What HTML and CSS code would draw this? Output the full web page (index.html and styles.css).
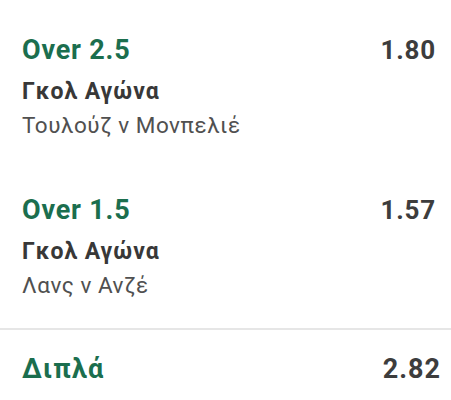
FILE: index.html
```html
<!DOCTYPE html>
<html lang="el">
<head>
    <meta charset="UTF-8">
    <meta name="viewport" content="width=device-width, initial-scale=1.0">
    <title>Betslip</title>
    <link rel="stylesheet" href="styles.css">
</head>
<body>
    <div class="slip">
        <div class="bet">
            <div class="bet-head">
                <span class="pick">Over 2.5</span>
                <span class="odds">1.80</span>
            </div>
            <div class="market">Γκολ Αγώνα</div>
            <div class="event">Τουλούζ ν Μονπελιέ</div>
        </div>
        <div class="bet">
            <div class="bet-head">
                <span class="pick">Over 1.5</span>
                <span class="odds">1.57</span>
            </div>
            <div class="market">Γκολ Αγώνα</div>
            <div class="event">Λανς ν Ανζέ</div>
        </div>
    </div>
    <div class="total">
        <span class="total-name">Διπλά</span>
        <span class="total-odds">2.82</span>
    </div>
</body>
</html>
```

FILE: styles.css
```css
body{
    margin: 0;
    background: #ffffff;
    font-family: Roboto, "Noto Sans", sans-serif;
}
.slip{
    padding: 35px 16px 27px 22px;
}
.bet + .bet{
    margin-top: 54px;
}
.bet-head{
    display: flex;
    justify-content: space-between;
    align-items: baseline;
    line-height: 30px;
}
.pick{
    font-size: 27px;
    font-weight: 700;
    letter-spacing: 0.8px;
    color: #1b6e4e;
}
.odds{
    font-size: 26px;
    font-weight: 700;
    letter-spacing: 0.8px;
    margin-right: -1px;
    color: #3d3d3d;
}
.market{
    margin-top: 13px;
    font-size: 23px;
    line-height: 28px;
    font-weight: 700;
    letter-spacing: 1px;
    color: #383838;
}
.event{
    margin-top: 3px;
    font-size: 22.5px;
    line-height: 32px;
    letter-spacing: 0.5px;
    color: #505050;
}
.total{
    display: flex;
    justify-content: space-between;
    align-items: baseline;
    border-top: 2px solid #e6e6e6;
    padding: 24px 10px 0 22px;
    line-height: 30px;
}
.total-name{
    font-size: 27px;
    font-weight: 700;
    letter-spacing: 1.3px;
    color: #1b6e4e;
}
.total-odds{
    font-size: 27px;
    font-weight: 700;
    letter-spacing: 1px;
    color: #3d3d3d;
}
```
